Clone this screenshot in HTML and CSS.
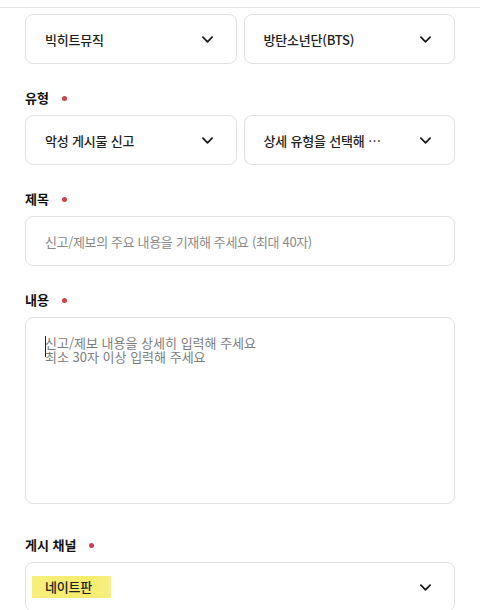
FILE: index.html
```html
<!DOCTYPE html>
<html lang="ko">
<head>
<meta charset="utf-8">
<link rel="stylesheet" href="styles.css">
</head>
<body>
<div class="topbar"></div>
<div class="form">
  <div class="row first">
    <div class="select"><span class="val">빅히트뮤직</span><svg class="chev" viewBox="0 0 12 7"><path d="M1 1 L6 6 L11 1"/></svg></div>
    <div class="select"><span class="val">방탄소년단(BTS)</span><svg class="chev" viewBox="0 0 12 7"><path d="M1 1 L6 6 L11 1"/></svg></div>
  </div>

  <div class="label">유형<span class="dot"></span></div>
  <div class="row">
    <div class="select"><span class="val">악성 게시물 신고</span><svg class="chev" viewBox="0 0 12 7"><path d="M1 1 L6 6 L11 1"/></svg></div>
    <div class="select"><span class="val">상세 유형을 선택해 …</span><svg class="chev" viewBox="0 0 12 7"><path d="M1 1 L6 6 L11 1"/></svg></div>
  </div>

  <div class="label">제목<span class="dot"></span></div>
  <div class="input">신고/제보의 주요 내용을 기재해 주세요 (최대 40자)</div>

  <div class="label">내용<span class="dot"></span></div>
  <div class="textarea"><span class="caret"></span><p class="ph">신고/제보 내용을 상세히 입력해 주세요<br>최소 30자 이상 입력해 주세요</p></div>

  <div class="label channel">게시 채널<span class="dot"></span></div>
  <div class="select wide"><span class="val"><span class="mark">네이트판</span></span><svg class="chev" viewBox="0 0 12 7"><path d="M1 1 L6 6 L11 1"/></svg></div>
</div>
</body>
</html>
```
FILE: styles.css
```css
html, body {
  margin: 0;
  padding: 0;
  background: #fff;
}
body {
  font-family: "Noto Sans CJK KR", "Noto Sans", sans-serif;
  color: #1a1a1a;
  width: 480px;
  height: 610px;
  overflow: hidden;
}
.topbar {
  height: 7px;
  border-bottom: 1px solid #e3e3e3;
}
.form {
  padding: 0 25px;
  display: flex;
  flex-direction: column;
}
.row {
  display: grid;
  grid-template-columns: 1fr 1fr;
  gap: 7px;
}
.row.first {
  margin-top: 6px;
}
.select {
  box-sizing: border-box;
  height: 50px;
  border: 1px solid #e2e2e2;
  border-radius: 8px;
  padding: 0 23px 0 19px;
  display: flex;
  align-items: center;
  justify-content: space-between;
}
.val {
  font-size: 13px;
  font-weight: 500;
  color: #222;
  letter-spacing: -0.2px;
  white-space: nowrap;
}
.chev {
  width: 11px;
  height: 7px;
  fill: none;
  stroke: #1a1a1a;
  stroke-width: 1.9;
  stroke-linecap: round;
  stroke-linejoin: round;
  flex: none;
}
.label {
  font-size: 13px;
  font-weight: 700;
  line-height: 20px;
  color: #111;
  margin-top: 24px;
  margin-bottom: 7px;
  display: flex;
  align-items: center;
}
.label.channel {
  margin-top: 31px;
}
.dot {
  width: 5px;
  height: 5px;
  border-radius: 50%;
  background: #cf3f4c;
  margin-left: 13px;
}
.input {
  box-sizing: border-box;
  height: 50px;
  border: 1px solid #e2e2e2;
  border-radius: 8px;
  padding: 0 19px;
  display: flex;
  align-items: center;
  font-size: 13px;
  color: #8a8a8a;
  letter-spacing: -0.35px;
}
.textarea {
  position: relative;
  box-sizing: border-box;
  height: 187px;
  border: 1px solid #e2e2e2;
  border-radius: 8px;
  padding: 18px 19px;
}
.ph {
  margin: 0;
  font-size: 13px;
  line-height: 14px;
  color: #7d7d7d;
}
.caret {
  position: absolute;
  left: 19px;
  top: 18px;
  width: 1px;
  height: 21px;
  background: #222;
}
.mark {
  display: inline-block;
  margin-left: -13px;
  padding: 0 19px 0 13px;
  line-height: 22px;
  background: linear-gradient(90deg, #f7ef7c, #f6eb6a 70%, #f8ef86);
}
```
